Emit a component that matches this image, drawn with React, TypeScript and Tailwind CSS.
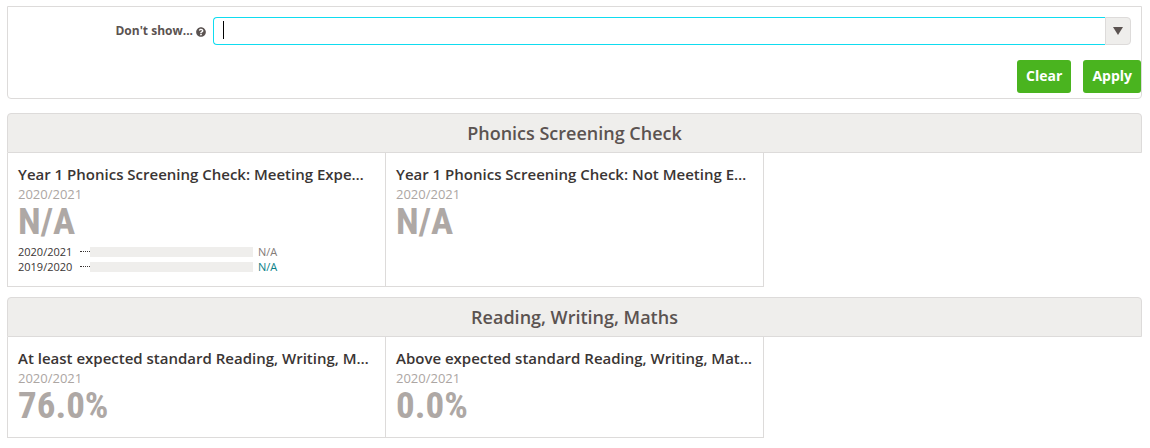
import { useState } from "react"
import { FaQuestionCircle } from "react-icons/fa"

type Bar = { year: string; value: string; valueClass: string }
type Measure = { title: string; year: string; value: string; bars?: Bar[] }

const phonics: Measure[] = [
  {
    title: "Year 1 Phonics Screening Check: Meeting Expe…",
    year: "2020/2021",
    value: "N/A",
    bars: [
      { year: "2020/2021", value: "N/A", valueClass: "text-[#857c78]" },
      { year: "2019/2020", value: "N/A", valueClass: "text-[#0b7f88]" },
    ],
  },
  { title: "Year 1 Phonics Screening Check: Not Meeting E…", year: "2020/2021", value: "N/A" },
]

const combined: Measure[] = [
  { title: "At least expected standard Reading, Writing, M…", year: "2020/2021", value: "76.0%" },
  { title: "Above expected standard Reading, Writing, Mat…", year: "2020/2021", value: "0.0%" },
]

const Filter = () => {
  const [value, setValue] = useState("")
  return (
    <form className="rounded-b border border-[#dddbda] pt-2.5 pb-[5px]" onSubmit={(e) => e.preventDefault()}>
      <div className="flex items-center pr-2.5">
        <label htmlFor="hide" className="flex w-[205px] shrink-0 items-center justify-end gap-[3px] pr-[7px] text-xs leading-5 font-bold text-[#5b5351]">
          Don't show...
          <FaQuestionCircle className="mt-0.5 size-2.5" />
        </label>
        <div className="relative flex h-7 flex-1">
          <input
            id="hide"
            value={value}
            onChange={(e) => setValue(e.target.value)}
            className="min-w-0 flex-1 rounded-l border border-r-0 border-[#0fdcf0] px-2.5 text-sm caret-transparent outline-none"
          />
          {value === "" && <span className="absolute top-1 left-2.5 h-[18px] w-px bg-black" />}
          <button type="button" aria-label="Show options" className="flex w-[26px] items-center justify-center rounded-r border border-[#dddbda] bg-[#efeeec]">
            <svg viewBox="0 0 10 8" className="h-2 w-2.5 fill-[#5b5351]">
              <path d="M0 0h10L5 8z" />
            </svg>
          </button>
        </div>
      </div>
      <div className="mt-[15px] flex justify-end gap-3 text-sm font-bold text-white">
        <button type="button" onClick={() => setValue("")} className="rounded-[3px] bg-[#4ab41f] px-[9px] pb-0.5 leading-[31px]">Clear</button>
        <button type="submit" className="rounded-[3px] bg-[#4ab41f] px-[9px] pb-0.5 leading-[31px]">Apply</button>
      </div>
    </form>
  )
}

const MeasureCard = ({ title, year, value, bars }: Measure) => (
  <article className="border-r border-b border-[#dddbda] px-2.5 pt-[11px] pb-3 whitespace-nowrap">
    <h3 className="text-[15px] leading-5 font-semibold text-[#3a3534]">{title}</h3>
    <p className="text-[13px] leading-5 text-[#aca6a3]">{year}</p>
    <p className="pt-px pb-0.5 font-['Roboto_Condensed',Roboto,sans-serif] text-[37px] leading-[34px] font-bold text-[#aea8a5]">{value}</p>
    {bars && (
      <div className="mt-[3px] text-[11px] leading-[15px]">
        {bars.map((bar) => (
          <div key={bar.year} className="flex items-center">
            <span className="w-[62px] text-[#3a3534]">{bar.year}</span>
            <span className="w-2.5 border-t border-dotted border-[#3a3534]" />
            <span className="mr-[5px] h-2.5 w-[163px] bg-[#efeeec]" />
            <span className={bar.valueClass}>{bar.value}</span>
          </div>
        ))}
      </div>
    )}
  </article>
)

const Section = ({ title, measures }: { title: string; measures: Measure[] }) => (
  <section>
    <h2 className="rounded-t border border-[#dddbda] bg-[#efeeec] text-center text-lg leading-[38px] font-semibold text-[#5b5351]">{title}</h2>
    <div className="grid grid-cols-3 border-l border-[#dddbda]">
      {measures.map((measure) => (
        <MeasureCard key={measure.title} {...measure} />
      ))}
    </div>
  </section>
)

const App = () => {
  return (
    <main className="bg-white pt-1.5 pr-2 pb-2.5 pl-[7px] font-['Open_Sans',sans-serif]">
      <Filter />
      <div className="mt-3.5 flex flex-col gap-2.5">
        <Section title="Phonics Screening Check" measures={phonics} />
        <Section title="Reading, Writing, Maths" measures={combined} />
      </div>
    </main>
  )
}

export default App
